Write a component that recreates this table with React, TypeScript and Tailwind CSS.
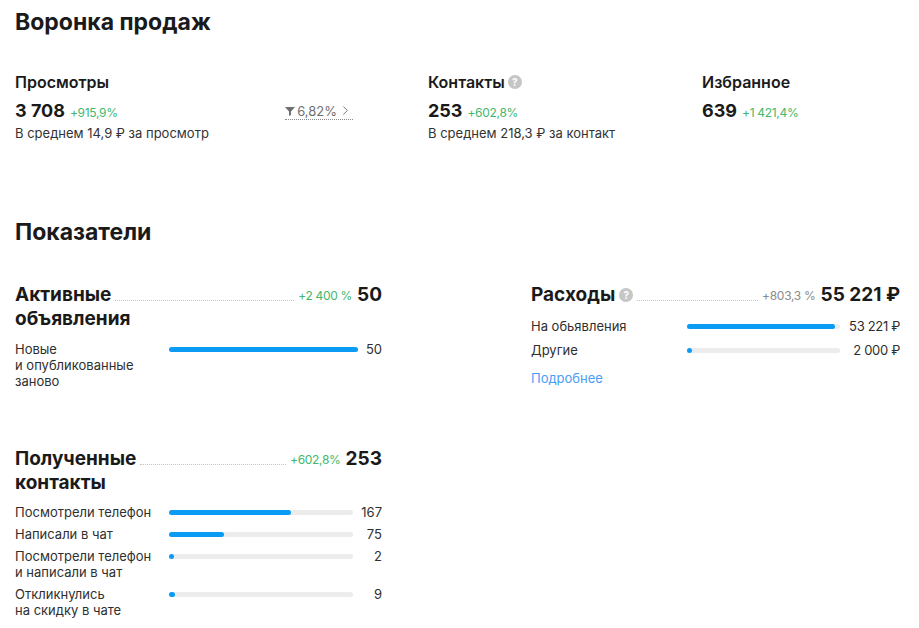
import { ChevronRight } from 'lucide-react';

const font = { fontFamily: 'Inter, "Noto Sans", sans-serif' };

function Help() {
  return (
    <span className="inline-flex h-[14px] w-[14px] items-center justify-center rounded-full bg-[#c6c6c6] text-[10px] font-bold leading-none text-white">
      ?
    </span>
  );
}

function Funnel() {
  return (
    <svg width="10" height="10" viewBox="0 0 10 10" className="mr-[2px]">
      <path d="M0 1h10L6 5.5V9L4 10V5.5z" fill="#6f6f6f" />
    </svg>
  );
}

function Leader() {
  return <div className="mx-1 mb-[6px] flex-1 border-b border-dotted border-[#c4c4c4]" />;
}

function Bar({ pct }: { pct: number }) {
  return (
    <div className="mt-[6px] h-[5px] rounded-full bg-[#ececec]">
      <div className="h-[5px] rounded-full bg-[#0a9cf5]" style={{ width: `${pct}%`, minWidth: 5 }} />
    </div>
  );
}

type Row = { label: string[]; pct: number; value: string };

function Rows({ rows }: { rows: Row[] }) {
  return (
    <div className="grid grid-cols-[146px_1fr_auto] gap-x-2 gap-y-[6px] text-[13px] leading-[16px] text-[#2f2f2f]">
      {rows.map((r) => (
        <div key={r.label.join()} className="contents">
          <div>
            {r.label.map((l) => (
              <div key={l}>{l}</div>
            ))}
          </div>
          <Bar pct={r.pct} />
          <div className="text-right">{r.value}</div>
        </div>
      ))}
    </div>
  );
}

export default function App() {
  const contacts: Row[] = [
    { label: ['Посмотрели телефон'], pct: 66, value: '167' },
    { label: ['Написали в чат'], pct: 30, value: '75' },
    { label: ['Посмотрели телефон', 'и написали в чат'], pct: 1, value: '2' },
    { label: ['Откликнулись', 'на скидку в чате'], pct: 3.5, value: '9' },
  ];

  return (
    <div className="min-h-screen bg-white px-[15px] pt-[7px] text-[#1a1a1a]" style={font}>
      <h1 className="text-[23px] font-bold leading-[30px]">Воронка продаж</h1>

      <div className="mt-[34px] grid grid-cols-[413px_274px_1fr]">
        <div className="w-[338px]">
          <div className="text-[16px] font-semibold leading-[22px]">Просмотры</div>
          <div className="mt-[7px] flex items-center justify-between">
            <div className="flex items-baseline gap-[5px]">
              <span className="text-[18px] font-bold leading-[22px]">3 708</span>
              <span className="text-[12px] tracking-tight text-[#3fb86c]">+915,9%</span>
            </div>
            <div className="flex items-center border-b border-dotted border-[#8a8a8a] text-[13px] leading-[16px] text-[#6f6f6f]">
              <Funnel />
              6,82%
              <ChevronRight size={15} strokeWidth={1.5} className="ml-[1px]" />
            </div>
          </div>
          <div className="mt-[3px] text-[13px] leading-[16px] text-[#333]">В среднем 14,9 ₽ за просмотр</div>
        </div>

        <div>
          <div className="flex items-center gap-[3px] text-[16px] font-semibold leading-[22px]">
            Контакты <Help />
          </div>
          <div className="mt-[7px] flex items-baseline gap-[5px]">
            <span className="text-[18px] font-bold leading-[22px]">253</span>
            <span className="text-[12px] tracking-tight text-[#3fb86c]">+602,8%</span>
          </div>
          <div className="mt-[3px] text-[13px] leading-[16px] text-[#333]">В среднем 218,3 ₽ за контакт</div>
        </div>

        <div>
          <div className="text-[16px] font-semibold leading-[22px]">Избранное</div>
          <div className="mt-[7px] flex items-baseline gap-[5px]">
            <span className="text-[18px] font-bold leading-[22px]">639</span>
            <span className="text-[12px] tracking-tight text-[#3fb86c]">+1 421,4%</span>
          </div>
        </div>
      </div>

      <h2 className="mt-[76px] text-[23px] font-bold leading-[30px]">Показатели</h2>

      <div className="mt-[36px] grid grid-cols-[367px_369px] gap-x-[149px]">
        <div>
          <div className="flex items-end">
            <span className="text-[19px] font-bold leading-[24px]">Активные</span>
            <Leader />
            <span className="mb-[3px] mr-[5px] text-[12px] leading-[16px] tracking-tight text-[#3fb86c]">+2 400 %</span>
            <span className="text-[19px] font-bold leading-[24px]">50</span>
          </div>
          <div className="text-[19px] font-bold leading-[24px]">объявления</div>
          <div className="mt-[10px]">
            <Rows rows={[{ label: ['Новые', 'и опубликованные', 'заново'], pct: 100, value: '50' }]} />
          </div>
        </div>

        <div>
          <div className="flex items-end">
            <span className="flex items-center gap-[4px] text-[19px] font-bold leading-[24px]">
              Расходы <Help />
            </span>
            <Leader />
            <span className="mb-[3px] mr-[5px] text-[12px] leading-[16px] tracking-tight text-[#8a8a8a]">+803,3 %</span>
            <span className="text-[19px] font-bold leading-[24px]">55 221 ₽</span>
          </div>
          <div className="mt-[11px] grid grid-cols-[148px_1fr_52px] gap-x-2 gap-y-[8px] text-[13px] leading-[16px] text-[#2f2f2f]">
            <div>На обьявления</div>
            <Bar pct={97} />
            <div className="whitespace-nowrap text-right tracking-tight">53 221 ₽</div>
            <div>Другие</div>
            <Bar pct={3.5} />
            <div className="whitespace-nowrap text-right tracking-tight">2 000 ₽</div>
          </div>
          <a className="mt-[12px] block text-[13px] leading-[16px] text-[#4a9df8]">Подробнее</a>
        </div>

        <div className="mt-[58px]">
          <div className="flex items-end">
            <span className="text-[19px] font-bold leading-[24px]">Полученные</span>
            <Leader />
            <span className="mb-[3px] mr-[5px] text-[12px] leading-[16px] tracking-tight text-[#3fb86c]">+602,8%</span>
            <span className="text-[19px] font-bold leading-[24px]">253</span>
          </div>
          <div className="text-[19px] font-bold leading-[24px]">контакты</div>
          <div className="mt-[9px]">
            <Rows rows={contacts} />
          </div>
        </div>
      </div>
    </div>
  );
}
